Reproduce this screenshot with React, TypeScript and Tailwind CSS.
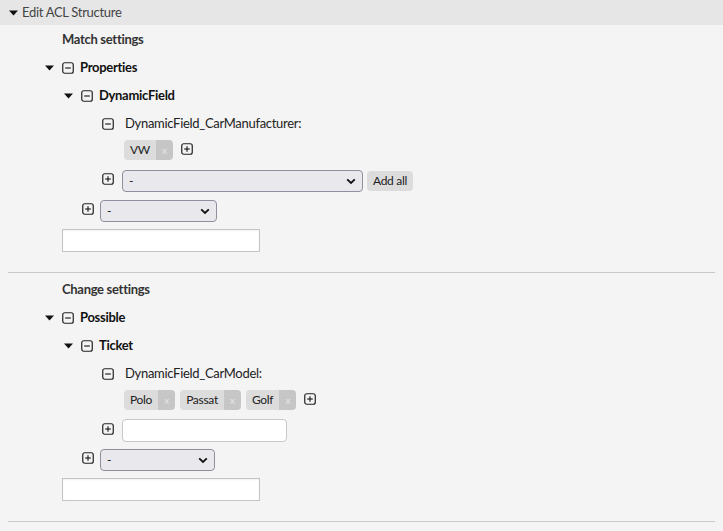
import React from "react";

function Caret({ className = "" }: { className?: string }) {
  return (
    <svg width="9" height="6" viewBox="0 0 9 6" className={className}>
      <path d="M0 0.5 L9 0.5 L4.5 5.5 Z" fill="#111" />
    </svg>
  );
}

function BoxIcon({ plus }: { plus?: boolean }) {
  return (
    <svg width="12" height="12" viewBox="0 0 12 12" className="shrink-0">
      <rect x="0.75" y="0.75" width="10.5" height="10.5" rx="2" fill="none" stroke="#222" strokeWidth="1.2" />
      <path d="M3.2 6 H8.8" stroke="#222" strokeWidth="1.2" />
      {plus && <path d="M6 3.2 V8.8" stroke="#222" strokeWidth="1.2" />}
    </svg>
  );
}

function Select({ width }: { width: string }) {
  return (
    <div
      className={`flex h-[22px] items-center justify-between rounded-[4px] border border-[#8f8f9d] bg-[#e9e9ed] pl-[6px] pr-[6px] text-[12px] text-[#111] ${width}`}
    >
      <span>-</span>
      <svg width="10" height="7" viewBox="0 0 10 7">
        <path d="M1.2 1.3 L5 5 L8.8 1.3" fill="none" stroke="#111" strokeWidth="1.8" />
      </svg>
    </div>
  );
}

function Tag({ label }: { label: string }) {
  return (
    <div className="flex h-[20px] overflow-hidden rounded-[4px] text-[12px]">
      <span className="flex items-center bg-[#dcdcdc] px-[6px] text-[#222]">{label}</span>
      <span className="flex w-[17px] items-center justify-center bg-[#c6c6c6] text-[10px] text-[#e6e6e6]">x</span>
    </div>
  );
}

function Branch({ level, label }: { level: number; label: string }) {
  return (
    <div className="flex h-[28px] items-center" style={{ paddingLeft: 45 + 19 * (level - 1) }}>
      <Caret />
      <span className="ml-[8px]">
        <BoxIcon />
      </span>
      <span className="ml-[6px] text-[13px] font-bold text-[#111]">{label}</span>
    </div>
  );
}

function Section({
  title,
  top,
  mid,
  field,
  tags,
  fieldInput,
}: {
  title: string;
  top: string;
  mid: string;
  field: string;
  tags: string[];
  fieldInput: "select" | "input";
}) {
  return (
    <div>
      <div className="flex h-[28px] items-center pl-[62px] text-[13px] font-bold text-[#333]">{title}</div>
      <Branch level={1} label={top} />
      <Branch level={2} label={mid} />
      <div className="flex h-[28px] items-center pl-[102px]">
        <BoxIcon />
        <span className="ml-[11px] text-[13px] text-[#222]">{field}</span>
      </div>
      <div className="mt-[2px] flex h-[20px] items-center gap-[5px] pl-[124px]">
        {tags.map((t) => (
          <Tag key={t} label={t} />
        ))}
        <span className="ml-[3px] -mt-[2px]">
          <BoxIcon plus />
        </span>
      </div>
      {fieldInput === "select" ? (
        <div className="mt-[10px] flex h-[22px] items-center pl-[102px]">
          <span className="-mt-[4px]">
            <BoxIcon plus />
          </span>
          <div className="ml-[8px]">
            <Select width="w-[241px]" />
          </div>
          <button className="ml-[4px] h-[20px] rounded-[4px] bg-[#dcdcdc] px-[6px] text-[12px] text-[#222]">
            Add all
          </button>
        </div>
      ) : (
        <div className="mt-[9px] flex h-[22px] items-center pl-[102px]">
          <span className="-mt-[2px]">
            <BoxIcon plus />
          </span>
          <div className="ml-[8px] h-[23px] w-[165px] rounded-[4px] border border-[#c8c8c8] bg-white" />
        </div>
      )}
      <div className="mt-[8px] flex h-[22px] items-center pl-[82px]">
        <span className="-mt-[4px]">
          <BoxIcon plus />
        </span>
        <div className="ml-[6px]">
          <Select width={fieldInput === "select" ? "w-[117px]" : "w-[115px]"} />
        </div>
      </div>
      <div className="ml-[62px] mt-[7px] h-[23px] w-[198px] border border-[#c4c4c4] bg-white shadow-[inset_0_1px_2px_rgba(0,0,0,0.06)]" />
      <div className="mx-[8px] mt-[20px] border-t border-[#cacaca]" />
    </div>
  );
}

export default function App() {
  return (
    <div className="h-[531px] w-[723px] bg-[#f4f4f4] font-['Lato','Liberation_Sans',sans-serif] tracking-[-0.3px]">
      <div className="flex h-[25px] items-center bg-[#e6e6e6] pl-[9px]">
        <Caret />
        <span className="ml-[4px] text-[13px] text-[#444]">Edit ACL Structure</span>
      </div>
      <div className="pt-[1px]">
        <Section
          title="Match settings"
          top="Properties"
          mid="DynamicField"
          field="DynamicField_CarManufacturer:"
          tags={["VW"]}
          fieldInput="select"
        />
        <div className="h-[3px]" />
        <Section
          title="Change settings"
          top="Possible"
          mid="Ticket"
          field="DynamicField_CarModel:"
          tags={["Polo", "Passat", "Golf"]}
          fieldInput="input"
        />
      </div>
    </div>
  );
}
